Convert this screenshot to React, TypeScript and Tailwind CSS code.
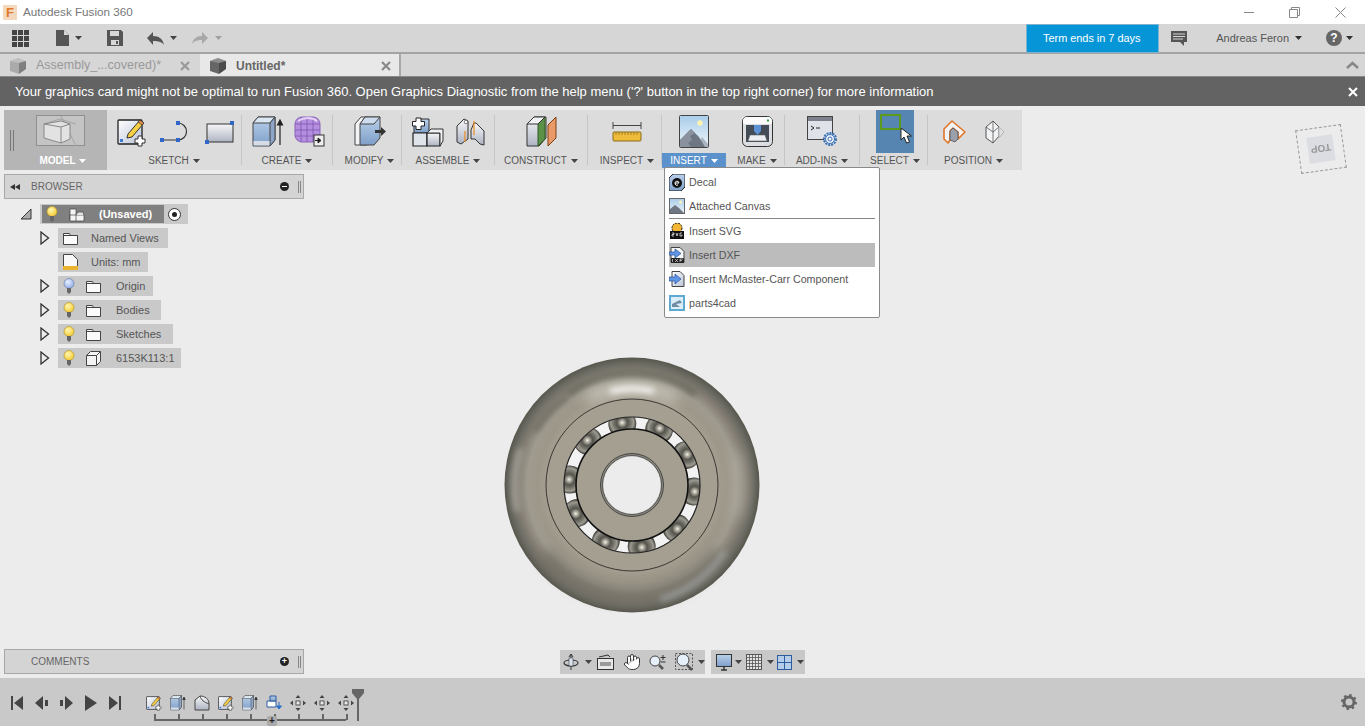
import type { ReactNode } from "react";
import { Hand } from "lucide-react";

function Caret({ color = "#444" }: { color?: string }) {
  return (
    <svg width="7" height="4" viewBox="0 0 7 4" className="shrink-0">
      <path d="M0 0h7L3.5 4z" fill={color} />
    </svg>
  );
}

function Defs() {
  return (
    <svg className="absolute w-0 h-0">
      <defs>
        <linearGradient id="gBlue" x1="0" y1="0" x2="0" y2="1">
          <stop offset="0" stopColor="#b9d0ea" />
          <stop offset="1" stopColor="#7f9fc8" />
        </linearGradient>
        <linearGradient id="gGrey" x1="0" y1="0" x2="0" y2="1">
          <stop offset="0" stopColor="#f6f7f9" />
          <stop offset="1" stopColor="#aeb4c2" />
        </linearGradient>
        <linearGradient id="gSky" x1="0" y1="0" x2="0" y2="1">
          <stop offset="0" stopColor="#a9cdea" />
          <stop offset="1" stopColor="#eef5fa" />
        </linearGradient>
        <linearGradient id="gPaper" x1="0" y1="0" x2="1" y2="1">
          <stop offset="0" stopColor="#ffffff" />
          <stop offset="1" stopColor="#b9c3d6" />
        </linearGradient>
        <radialGradient id="gBulbY" cx="0.4" cy="0.35" r="0.7">
          <stop offset="0" stopColor="#fff7b0" />
          <stop offset="1" stopColor="#f2c92c" />
        </radialGradient>
        <radialGradient id="gBulbB" cx="0.4" cy="0.35" r="0.7">
          <stop offset="0" stopColor="#e6efff" />
          <stop offset="1" stopColor="#8fabe6" />
        </radialGradient>
        <radialGradient id="gTorus" gradientUnits="userSpaceOnUse" cx="0" cy="0" r="128">
          <stop offset="0.66" stopColor="#a59f91" />
          <stop offset="0.74" stopColor="#9d9789" />
          <stop offset="0.82" stopColor="#a09b8f" />
          <stop offset="0.89" stopColor="#857f75" />
          <stop offset="0.95" stopColor="#6c6b63" />
          <stop offset="1" stopColor="#56554c" />
        </radialGradient>
        <radialGradient id="gBall" cx="0.5" cy="0.46" r="0.5">
          <stop offset="0" stopColor="#f4f2ea" />
          <stop offset="0.14" stopColor="#b5b2a6" />
          <stop offset="0.38" stopColor="#55544d" />
          <stop offset="0.6" stopColor="#74736a" />
          <stop offset="0.82" stopColor="#9c9a91" />
          <stop offset="1" stopColor="#45453f" />
        </radialGradient>
        <clipPath id="ballRing">
          <path
            clipRule="evenodd"
            d="M-68 0a68 68 0 1 0 136 0a68 68 0 1 0-136 0zM-56 0a56 56 0 1 0 112 0a56 56 0 1 0-112 0z"
          />
        </clipPath>
        <filter id="blur2" filterUnits="userSpaceOnUse" x="-128" y="-128" width="256" height="256">
          <feGaussianBlur stdDeviation="3" />
        </filter>
        <filter id="blur4" filterUnits="userSpaceOnUse" x="-128" y="-128" width="256" height="256">
          <feGaussianBlur stdDeviation="7" />
        </filter>
      </defs>
    </svg>
  );
}

function SketchIcon({ s = 30 }: { s?: number }) {
  return (
    <svg width={s} height={s} viewBox="0 0 30 30">
      <rect x="1" y="3" width="24" height="24" rx="1" fill="url(#gPaper)" stroke="#222" strokeWidth="1.3" />
      <rect x="3" y="22" width="3" height="3" fill="#3d7ad0" />
      <path d="M11 17L23 3l4 3-12 14-5 1z" fill="#f6cf45" stroke="#333" />
      <path d="M23 3l4 3-2 2-4-3z" fill="#e58a4a" stroke="#333" strokeWidth=".7" />
      <path d="M21 19h4v3h3v4h-3v3h-4v-3h-3v-4h3z" fill="#fff" stroke="#333" />
    </svg>
  );
}

function ExtrudeIcon({ s = 32 }: { s?: number }) {
  return (
    <svg width={s} height={s} viewBox="0 0 32 32">
      <path d="M1 7l5-6h17v23l-5 6H1z" fill="url(#gBlue)" stroke="#444" />
      <path d="M1 7l5-6h17l-5 6z" fill="#dbe6f3" stroke="#444" />
      <path d="M18 7l5-6v23l-5 6z" fill="#8da5c8" stroke="#444" />
      <path d="M1.5 25h16v4.5h-16z" fill="#d6dce6" />
      <path d="M28 29V6M25.5 9L28 4l2.500 5z" stroke="#222" strokeWidth="1.2" fill="#222" />
    </svg>
  );
}

function FormIcon() {
  return (
    <svg width="31" height="31" viewBox="0 0 31 31">
      <rect x="1" y="1" width="25" height="25" rx="7" fill="#b48fe0" stroke="#8a63b8" />
      <path d="M7 1v25M13 1v25M19 1v25M1 8h25M1 14h25M1 20h25" stroke="#7d55ad" strokeWidth="0.8" />
      <path d="M4 5c6-4 14-4 19 0" stroke="#e3d2f5" strokeWidth="2" fill="none" />
      <rect x="20" y="19" width="10" height="11" fill="#eee" stroke="#333" />
      <path d="M21 24.500h5M24 22l3 2.500-3 2.500z" stroke="#222" fill="#222" />
    </svg>
  );
}

function ModifyIcon() {
  return (
    <svg width="32" height="32" viewBox="0 0 32 32">
      <path d="M1 8l6-7h6v28H1z" fill="#f3f4f6" stroke="#444" />
      <path d="M6 29V8l5-7h15v21l-6 7z" fill="url(#gBlue)" stroke="#444" />
      <path d="M6 8l5-7h15l-6 7z" fill="#cddcee" stroke="#444" />
      <path d="M21 14h6v-3l5 4.500-5 4.500v-3h-6z" fill="#333" />
    </svg>
  );
}

function AssembleIcon() {
  return (
    <svg width="32" height="30" viewBox="0 0 32 30">
      <path d="M2 6l4-4h11v14H2z" fill="url(#gBlue)" stroke="#333" />
      <path d="M1 16h14v13H1z" fill="#dfe3ea" stroke="#222" strokeWidth="1.200" />
      <path d="M15 16h13v13H15z" fill="url(#gGrey)" stroke="#222" strokeWidth="1.200" />
      <path d="M15 16l4-4h12v12l-3 5V16z" fill="#eef0f3" stroke="#333" />
      <path d="M4 1h5v3.500h3.500v4.500H9v3.500H4V9H.5V4.500H4z" fill="#fff" stroke="#222" />
    </svg>
  );
}

function JointIcon() {
  return (
    <svg width="29" height="30" viewBox="0 0 29 30">
      <path d="M1 9l7-7 4 2v18l-7 5-4-2z" fill="url(#gGrey)" stroke="#333" />
      <circle cx="10" cy="5" r="1.800" fill="#fff" stroke="#333" strokeWidth=".6" />
      <path d="M15 13l3-7h2l8 8v14l-4-1-5-5h-4z" fill="url(#gGrey)" stroke="#333" />
      <path d="M9 14v11M18 4v14" stroke="#f08a1f" strokeWidth="1.200" />
    </svg>
  );
}

function ConstructIcon() {
  return (
    <svg width="31" height="31" viewBox="0 0 31 31">
      <path d="M1 8l7-7h12v21l-7 8H1z" fill="url(#gGrey)" stroke="#333" />
      <path d="M12 8l7-7v22l-7 7z" fill="#5c9148" stroke="#2f5a22" />
      <path d="M1 8l7-7h11l-7 7z" fill="#f1f2f4" stroke="#333" />
      <path d="M22 9l8-8v21l-8 8z" fill="#ea9a66" stroke="#7a3e14" />
    </svg>
  );
}

function InspectIcon() {
  return (
    <svg width="30" height="22" viewBox="0 0 30 22">
      <path d="M1 1v7M29 1v7M1 4.500h28" stroke="#444" fill="none" />
      <rect x="1" y="11" width="28" height="9" rx="1" fill="#eebc3a" stroke="#8a6d1d" />
      <path d="M4 11v3M7 11v3M10 11v3M13 11v3M16 11v3M19 11v3M22 11v3M25 11v3" stroke="#8a6d1d" strokeWidth=".7" />
    </svg>
  );
}

function PictureIcon({ s = 30 }: { s?: number }) {
  return (
    <svg width={s} height={s * 1.1} viewBox="0 0 30 33">
      <rect x="0.500" y="0.500" width="29" height="32" rx="1" fill="url(#gSky)" stroke="#444" />
      <circle cx="21" cy="8" r="2.700" fill="#fff3b0" />
      <path d="M18 32l5-10 6 7v3z" fill="#a9b4c0" />
      <path d="M1 32V25L12 14l8 8 6 10z" fill="#6f7785" />
      <path d="M12 14l4 4-5 3 2 4-4 3 3 4H1v-7z" fill="#8a92a0" />
    </svg>
  );
}

function MakeIcon() {
  return (
    <svg width="31" height="31" viewBox="0 0 31 31">
      <rect x="0.500" y="0.500" width="30" height="30" rx="5" fill="#dcdee2" stroke="#333" />
      <path d="M1 5a4 4 0 0 1 4-4h21a4 4 0 0 1 4 4v3H1z" fill="#fbfbfc" />
      <rect x="4" y="9" width="23" height="17" fill="#444c58" />
      <path d="M12 9h7v6l-3.500 4-3.500-4z" fill="#5d93d6" />
      <path d="M8 19h15l2 6H6z" fill="#eceef2" stroke="#666" strokeWidth=".6" />
      <rect x="25" y="3.500" width="2" height="2" fill="#2f9a3a" />
    </svg>
  );
}

function AddInsIcon() {
  return (
    <svg width="31" height="31" viewBox="0 0 31 31">
      <rect x="0.500" y="0.500" width="25" height="23" fill="#dfe2e8" stroke="#444" />
      <rect x="1" y="1" width="24" height="4" fill="#7b808a" />
      <path d="M4 10l3 2-3 2M9 12h4" stroke="#222" fill="none" />
      <circle cx="23" cy="23" r="6" fill="#cfe0f5" stroke="#3b6fb0" strokeWidth="2" strokeDasharray="2 1" />
      <circle cx="23" cy="23" r="4.500" fill="#e9f0fa" stroke="#3b6fb0" />
      <circle cx="23" cy="23" r="2" fill="#fff" stroke="#3b6fb0" />
    </svg>
  );
}

function SelectIcon() {
  return (
    <div className="relative w-[38px] h-[43px] bg-[#5585b0] -mt-[1px]">
      <div className="absolute left-[4px] top-[4px] w-[21px] h-[16px] border-2 border-[#5c9a1c]" />
      <svg width="13" height="16" viewBox="0 0 13 16" className="absolute left-[24px] top-[18px]">
        <path d="M1 0v12l3-3 2.500 6 3-1-2.500-6h4.500z" fill="#fff" stroke="#222" />
      </svg>
    </div>
  );
}

function PositionIcon() {
  return (
    <svg width="23" height="24" viewBox="0 0 23 24">
      <path d="M9 1l13 11-7 7v-7l-5-4-3 3v9l-2 3-4-4V9z" fill="#f2f3f6" stroke="#e0762a" strokeWidth="1.600" strokeLinejoin="round" />
      <path d="M7 11l3-3 5 4v7l-3 3-5-2z" fill="#9aa0aa" stroke="#444" strokeWidth=".7" />
    </svg>
  );
}

function PositionIcon2() {
  return (
    <svg width="20" height="24" viewBox="0 0 20 24">
      <path d="M8 1l6 6v9l-6 7-7-5V7z" fill="#f2f3f5" stroke="#555" />
      <path d="M8 1v22M1 7l7 5 6-5" stroke="#555" fill="none" strokeWidth=".8" />
      <path d="M14 7l5 5-5 6z" fill="#e0e0e0" stroke="#b5b5b5" />
    </svg>
  );
}

function Cube({ color = "#666", s = 16 }: { color?: string; s?: number }) {
  return (
    <svg width={s} height={s} viewBox="0 0 16 16">
      <path d="M0 3l8-3 8 3v8l-7 5-9-3z" fill={color} />
      <path d="M0 3l9 2 7-2-8-3z" fill="#fff" fillOpacity=".25" />
      <path d="M9 5v11l7-5V3z" fill="#000" fillOpacity=".25" />
    </svg>
  );
}

function CloseX({ color }: { color: string }) {
  return (
    <svg width="10" height="10" viewBox="0 0 10 10" className="ml-auto mr-[8px] shrink-0">
      <path d="M1 1l8 8M9 1L1 9" stroke={color} strokeWidth="2.200" />
    </svg>
  );
}

function Bulb({ blue = false }: { blue?: boolean }) {
  return (
    <svg width="12" height="16" viewBox="0 0 12 16" className="shrink-0">
      <circle cx="6" cy="5.500" r="5" fill={blue ? "url(#gBulbB)" : "url(#gBulbY)"} stroke={blue ? "#6d80a8" : "#b8962a"} strokeWidth=".7" />
      <path d="M4 10h4v3.500l-1 2H5l-1-2z" fill="#666" />
    </svg>
  );
}

function Folder() {
  return (
    <svg width="15" height="13" viewBox="0 0 15 13" className="shrink-0">
      <path d="M.5 1.500h6l1 2h7v9H.5z" fill="#fbfbfb" stroke="#444" />
      <path d="M.5 3.500h14" stroke="#444" />
    </svg>
  );
}

function Arrow() {
  return (
    <svg width="10" height="14" viewBox="0 0 10 14" className="shrink-0">
      <path d="M1 1l7.500 6L1 13z" fill="#ececec" stroke="#333" strokeWidth="1.300" />
    </svg>
  );
}

function TreeRow({
  label,
  leading,
  icon,
  width,
  gapClass,
  arrow = true,
}: {
  label: string;
  leading?: ReactNode;
  icon: ReactNode;
  width: string;
  gapClass: string;
  arrow?: boolean;
}) {
  return (
    <div className="flex items-center h-[20px]">
      <div className="w-[18px] flex justify-start">{arrow && <Arrow />}</div>
      <div className={`${width} h-[20px] bg-[#c9c9c9] flex items-center pl-[5px] text-[11px] text-[#555]`}>
        {leading && <span className="mr-[11px] flex">{leading}</span>}
        {icon}
        <span className={gapClass}>{label}</span>
      </div>
    </div>
  );
}

function ToolGroup({ width, label, children }: { width: string; label: string; children: ReactNode }) {
  return (
    <div className={`${width} flex flex-col items-center shrink-0`}>
      <div className="h-[43px] w-full flex items-center justify-center">{children}</div>
      <div className="h-[15px] flex items-center gap-[4px] text-[10px] text-[#555]">
        {label}
        <Caret />
      </div>
    </div>
  );
}

function Sep() {
  return <div className="w-px h-[50px] self-center bg-[#c6c6c6] shrink-0" />;
}

function Toolbar() {
  return (
    <div className="ml-[4px] mt-[4px] w-[1018px] h-[60px] bg-[#dcdcdc] flex">
      <div className="w-[103px] h-[60px] bg-[#b5b5b5] relative flex flex-col items-center shrink-0">
        <div className="absolute left-[6px] top-[20px] w-[4px] h-[21px] border-x border-[#777]" />
        <svg width="50" height="32" viewBox="0 0 50 32" className="mt-[5px] ml-[10px]">
          <rect x="0.500" y="0.500" width="48" height="30" fill="#c4c4c4" stroke="#8f8f8f" />
          <path d="M25 1l15 30M8 9l16-5 16 5" stroke="#a5a5a5" fill="none" />
          <path d="M8 9l17-3 9 3v15l-9 4-17-5z" fill="#e2e2e2" stroke="#888" />
          <path d="M8 9l17 3 9-3M25 12v16" stroke="#888" fill="none" />
        </svg>
        <div className="mt-[6px] ml-[14px] flex items-center gap-[3px] text-[10px] font-bold text-white">
          MODEL
          <Caret color="#fff" />
        </div>
      </div>

      <ToolGroup width="w-[134px]" label="SKETCH">
        <div className="flex items-center gap-[13px] ml-[3px]">
          <SketchIcon />
          <svg width="32" height="24" viewBox="0 0 32 24">
            <path d="M2 20h16a8.500 8.500 0 0 0 0-17h-2" fill="none" stroke="#333" strokeWidth="1.200" />
            <path d="M0 18h4v4H0zM16 18h4v4h-4zM16 1h4v4h-4z" fill="#2f66c8" />
          </svg>
          <svg width="30" height="26" viewBox="0 0 30 26">
            <rect x="2" y="5" width="26" height="18" fill="url(#gGrey)" stroke="#333" />
            <path d="M25 2h4v4h-4zM0 21h4v4H0z" fill="#2f66c8" />
          </svg>
        </div>
      </ToolGroup>
      <Sep />
      <ToolGroup width="w-[90px]" label="CREATE">
        <div className="flex items-center gap-[10px] ml-[2px]">
          <ExtrudeIcon />
          <FormIcon />
        </div>
      </ToolGroup>
      <Sep />
      <ToolGroup width="w-[68px] pl-[5px]" label="MODIFY">
        <ModifyIcon />
      </ToolGroup>
      <Sep />
      <ToolGroup width="w-[92px]" label="ASSEMBLE">
        <div className="flex items-center gap-[12px]">
          <AssembleIcon />
          <JointIcon />
        </div>
      </ToolGroup>
      <Sep />
      <ToolGroup width="w-[92px]" label="CONSTRUCT">
        <ConstructIcon />
      </ToolGroup>
      <Sep />
      <ToolGroup width="w-[73px] pl-[5px]" label="INSPECT">
        <InspectIcon />
      </ToolGroup>
      <Sep />
      <div className="w-[64px] flex flex-col items-center shrink-0">
        <div className="h-[43px] w-full flex items-center justify-center">
          <PictureIcon />
        </div>
        <div className="h-[15px] w-full bg-[#5b92cc] flex items-center justify-center gap-[4px] text-[10px] text-white">
          INSERT
          <Caret color="#fff" />
        </div>
      </div>
      <ToolGroup width="w-[58px] pl-[4px]" label="MAKE">
        <MakeIcon />
      </ToolGroup>
      <Sep />
      <ToolGroup width="w-[74px]" label="ADD-INS">
        <AddInsIcon />
      </ToolGroup>
      <Sep />
      <ToolGroup width="w-[67px] pl-[3px]" label="SELECT">
        <SelectIcon />
      </ToolGroup>
      <Sep />
      <div className="flex-1 flex flex-col items-center pr-[3px]">
        <div className="h-[43px] flex items-center gap-[19px]">
          <PositionIcon />
          <PositionIcon2 />
        </div>
        <div className="h-[15px] flex items-center gap-[4px] text-[10px] text-[#555]">
          POSITION
          <Caret />
        </div>
      </div>
    </div>
  );
}

function MenuRow({ icon, label, active = false }: { icon: ReactNode; label: string; active?: boolean }) {
  return (
    <div className={`h-[24px] flex items-center gap-[4px] text-[10.7px] text-[#555] shrink-0 ${active ? "bg-[#bcbcbc]" : ""}`}>
      <span className="w-[16px] h-[16px] flex shrink-0">{icon}</span>
      {label}
    </div>
  );
}

function InsertMenu() {
  return (
    <div className="absolute left-[664px] top-[61px] w-[216px] h-[151px] bg-white border border-[#8a8a8a] rounded-[2px] px-[4px] pt-[2px] flex flex-col">
      <MenuRow
        label="Decal"
        icon={
          <svg width="16" height="17" viewBox="0 0 16 17">
            <path d="M0 4l4-4h12v13l-4 4H0z" fill="url(#gBlue)" stroke="#222" />
            <circle cx="8" cy="9" r="5" fill="#111" />
            <path d="M6 9h4a2 2 0 1 0-1 2" stroke="#fff" fill="none" />
          </svg>
        }
      />
      <MenuRow
        label="Attached Canvas"
        icon={
          <svg width="16" height="16" viewBox="0 0 16 16">
            <rect x=".5" y=".5" width="15" height="15" fill="url(#gSky)" stroke="#666" />
            <path d="M1 15v-4l5-4 4 3 5 5z" fill="#6f7785" />
            <circle cx="11.500" cy="4" r="1.500" fill="#fff3b0" />
          </svg>
        }
      />
      <div className="h-px bg-[#888] shrink-0" />
      <MenuRow
        label="Insert SVG"
        icon={
          <svg width="16" height="16" viewBox="0 0 16 16">
            <circle cx="8" cy="5" r="5" fill="#f2b632" stroke="#111" strokeDasharray="2 1" />
            <rect x="1" y="8" width="14" height="8" fill="#111" />
            <path d="M3 10h2v1.500H3v1.500h2M7 10l1 3 1-3M13 10h-2v3h2v-1.500" stroke="#fff" strokeWidth=".7" fill="none" />
          </svg>
        }
      />
      <MenuRow
        active
        label="Insert DXF"
        icon={
          <svg width="16" height="16" viewBox="0 0 16 16">
            <path d="M2 .5h9l4 4v11H2z" fill="#f5f5f5" stroke="#444" />
            <path d="M0 5h6V2l6 4.500-6 4.500V8H0z" fill="#5f97e6" stroke="#264f9a" strokeWidth=".7" />
            <rect x="2" y="11" width="13" height="5" fill="#222" />
            <path d="M3.500 12v3M6 12l3 3M9 12l-3 3M11 15v-3h3M11 13.500h2" stroke="#fff" strokeWidth=".6" fill="none" />
          </svg>
        }
      />
      <MenuRow
        label="Insert McMaster-Carr Component"
        icon={
          <svg width="16" height="16" viewBox="0 0 16 16">
            <path d="M3 .5h8l4 4v11H3z" fill="url(#gPaper)" stroke="#444" />
            <path d="M0 6h6V3l6 5-6 5v-3H0z" fill="#5f97e6" stroke="#264f9a" strokeWidth=".7" />
          </svg>
        }
      />
      <MenuRow
        label="parts4cad"
        icon={
          <svg width="16" height="16" viewBox="0 0 16 16">
            <rect width="16" height="16" fill="#5da9d2" />
            <rect x="2" y="2" width="12" height="12" fill="#dceef7" />
            <path d="M3 9l8-4 2 3-6 1 4 3H3z" fill="#6f8ea3" />
          </svg>
        }
      />
    </div>
  );
}

function Bearing() {
  const balls = [-9, 26, 61, 96, 134, 171, 205, 243, 275, 315];
  return (
    <svg width="256" height="256" viewBox="-128 -128 256 256" className="absolute left-[504px] top-[251px]">
      <circle r="127.500" fill="url(#gTorus)" />
      <g fill="none" strokeLinecap="round">
        <path d="M-62 -92a111 111 0 0 1 124 0" stroke="#5f5e55" strokeWidth="5" filter="url(#blur2)" />
        <path d="M-42 -88a97 97 0 0 1 84 0" stroke="#dedcd2" strokeWidth="8" filter="url(#blur4)" />
        <path d="M-20 -94a96 96 0 0 1 40 0" stroke="#fff" strokeWidth="5" filter="url(#blur2)" />
        <path d="M-85 70a110 110 0 0 0 170 0" stroke="#67645a" strokeWidth="9" filter="url(#blur4)" />
        <path d="M30 114a118 118 0 0 0 62 -46" stroke="#a3a8a7" strokeWidth="4" filter="url(#blur2)" />
        <path d="M-112 -35a118 118 0 0 0 -3 60" stroke="#b5b3aa" strokeWidth="4" filter="url(#blur2)" />
        <path d="M104 -30a108 108 0 0 1 0 60" stroke="#b8b4a8" strokeWidth="6" filter="url(#blur4)" />
        <path d="M-96 -55a111 111 0 0 1 30 -32" stroke="#6a6960" strokeWidth="5" filter="url(#blur2)" />
      </g>
      <circle r="86" fill="#a59f91" stroke="#1d1d1a" strokeWidth=".8" />
      <circle r="68" fill="#f2f2f2" />
      <g clipPath="url(#ballRing)">
        {balls.map((a) => (
          <g key={a} transform={`rotate(${a}) translate(0 -62)`}>
            <circle r="14" fill="url(#gBall)" />
          </g>
        ))}
      </g>
      <circle r="68" fill="none" stroke="#222" strokeWidth="1.200" />
      <circle r="56" fill="#a59f91" stroke="#111" strokeWidth="1.600" />
      <circle r="31.500" fill="#8b8a82" stroke="#222" strokeWidth=".7" />
      <circle r="29.500" fill="#c8c8c4" stroke="#333" strokeWidth=".7" />
      <circle r="28.500" fill="#ececec" />
    </svg>
  );
}

function ViewCube() {
  return (
    <div className="absolute left-[1298px] top-[21px] w-[46px] h-[44px] border border-dashed border-[#999] rotate-[-8deg] flex items-center justify-center">
      <div className="w-[26px] h-[26px] bg-[#dcdde2] flex items-center justify-center rotate-180 text-[10px] font-bold text-[#999]">
        TOP
      </div>
    </div>
  );
}

function NavBar() {
  return (
    <div className="absolute left-[560px] bottom-[4px] flex gap-[6px]">
      <div className="w-[145px] h-[24px] bg-[#c8c8c8] flex items-center pl-[3px]">
        <svg width="16" height="18" viewBox="0 0 16 18">
          <path d="M8 1v16M8 1L6 4M8 1l2 3" stroke="#333" fill="none" />
          <ellipse cx="8" cy="10" rx="7" ry="3" fill="none" stroke="#333" strokeWidth="1.200" />
          <path d="M6 5h4v8H6z" fill="#dfe4ea" stroke="#345" strokeWidth=".6" />
        </svg>
        <span className="ml-[6px]"><Caret /></span>
        <svg width="17" height="16" viewBox="0 0 17 16" className="ml-[5px]">
          <path d="M2 3l9-2 2 2" stroke="#333" fill="none" />
          <rect x=".5" y="4.500" width="16" height="11" fill="#e8e8e8" stroke="#333" />
          <rect x="3" y="8" width="11" height="4" fill="#9a9a9a" />
        </svg>
        <Hand size={18} strokeWidth={1.3} color="#333" fill="#fff" className="ml-[9px]" />
        <svg width="18" height="17" viewBox="0 0 18 17" className="ml-[8px]">
          <circle cx="6" cy="7" r="5" fill="#e6f0fa" stroke="#444" />
          <path d="M10 11l4 4" stroke="#555" strokeWidth="2.500" />
          <path d="M14 1v5M11.500 3.500h5M11.500 8h5" stroke="#333" />
        </svg>
        <svg width="19" height="18" viewBox="0 0 19 18" className="ml-[8px]">
          <rect x=".5" y=".5" width="17" height="16" fill="none" stroke="#555" strokeDasharray="2 1.500" />
          <circle cx="8" cy="7" r="6" fill="#e6f0fa" stroke="#444" />
          <path d="M12 12l5 5" stroke="#555" strokeWidth="2.500" />
        </svg>
        <span className="ml-[4px]"><Caret /></span>
      </div>
      <div className="w-[94px] h-[24px] bg-[#c8c8c8] flex items-center pl-[5px]">
        <svg width="16" height="17" viewBox="0 0 16 17">
          <rect x=".5" y=".5" width="15" height="12" fill="url(#gBlue)" stroke="#333" />
          <path d="M5 16h6M8 13v3" stroke="#333" strokeWidth="1.500" />
        </svg>
        <span className="ml-[3px]"><Caret /></span>
        <svg width="16" height="16" viewBox="0 0 16 16" className="ml-[4px]">
          <rect x=".5" y=".5" width="15" height="15" fill="#e4e4e4" stroke="#555" />
          <path d="M3.500 0v16M6.500 0v16M9.500 0v16M12.500 0v16M0 3.500h16M0 6.500h16M0 9.500h16M0 12.500h16" stroke="#555" strokeWidth=".8" />
        </svg>
        <span className="ml-[5px]"><Caret /></span>
        <svg width="15" height="15" viewBox="0 0 15 15" className="ml-[3px]">
          <rect x=".5" y=".5" width="14" height="14" fill="#b6cdea" stroke="#2c5b9e" />
          <path d="M7.500 0v15M0 7.500h15" stroke="#2c5b9e" />
        </svg>
        <span className="ml-[5px]"><Caret /></span>
      </div>
    </div>
  );
}

function TimelineMove() {
  return (
    <svg width="16" height="16" viewBox="0 0 16 16">
      <path d="M8 0l2.500 3h-5zM8 16l2.500-3h-5zM0 8l3-2.500v5zM16 8l-3-2.500v5z" fill="#444" />
      <rect x="6" y="6" width="4" height="4" fill="#eee" stroke="#555" />
    </svg>
  );
}

function Timeline() {
  const ticks = [0, 1, 2, 3, 4, 5, 6, 7, 8];
  return (
    <div className="h-[48px] bg-[#c9c9c9] flex items-start pl-[11px] relative shrink-0">
      <div className="flex items-center gap-[12px] mt-[17px]">
        <svg width="12" height="14" viewBox="0 0 12 14"><path d="M0 0h2v14H0zM12 0v14L3 7z" fill="#444" /></svg>
        <svg width="13" height="14" viewBox="0 0 13 14"><path d="M8 0v14L0 7zM10 4h3v6h-3z" fill="#444" /></svg>
        <svg width="13" height="14" viewBox="0 0 13 14"><path d="M5 0v14l8-7zM0 4h3v6H0z" fill="#444" /></svg>
        <svg width="12" height="16" viewBox="0 0 12 16"><path d="M0 0v16l12-8z" fill="#444" /></svg>
        <svg width="12" height="14" viewBox="0 0 12 14"><path d="M12 0h-2v14h2zM0 0v14l9-7z" fill="#444" /></svg>
      </div>
      <div className="absolute left-[146px] top-[17px] flex gap-[8px]">
        <SketchIcon s={16} />
        <ExtrudeIcon s={16} />
        <svg width="16" height="16" viewBox="0 0 16 16">
          <path d="M1 5l5-4c5 0 9 3 9 8v6H1z" fill="url(#gGrey)" stroke="#444" />
          <path d="M6 1c1 4 4 6 9 8" stroke="#444" fill="none" />
        </svg>
        <SketchIcon s={16} />
        <ExtrudeIcon s={16} />
        <svg width="16" height="16" viewBox="0 0 16 16">
          <path d="M1 6h9v6H1z" fill="#fff" stroke="#2c5b9e" />
          <path d="M4 1h6v5H4z" fill="url(#gBlue)" stroke="#2c5b9e" />
          <path d="M13 7v6M10.500 11l2.500 3 2.500-3z" stroke="#2c6fc9" fill="#2c6fc9" />
        </svg>
        <TimelineMove />
        <TimelineMove />
        <TimelineMove />
      </div>
      <div className="absolute left-[154px] top-[41px] w-[192px] h-[2px] bg-[#666]" />
      {ticks.map((t) => (
        <div key={t} className="absolute top-[36px] w-[2px] h-[6px] bg-[#666]" style={{ left: 154 + t * 24 }} />
      ))}
      <div className="absolute left-[267px] top-[38px] w-[10px] h-[10px] bg-[#aaa] rounded-[2px] flex items-center justify-center text-[10px] leading-none font-bold text-[#222]">
        +
      </div>
      <svg width="12" height="32" viewBox="0 0 12 32" className="absolute left-[352px] top-[11px]">
        <path d="M0 0h12v4L7 10v22H5V10L0 4z" fill="#666" />
      </svg>
      <svg width="16" height="16" viewBox="0 0 16 16" className="absolute left-[1341px] top-[16px]">
        <circle cx="8" cy="8" r="5" fill="none" stroke="#666" strokeWidth="3" />
        <circle cx="8" cy="8" r="7" fill="none" stroke="#666" strokeWidth="2" strokeDasharray="2.500 3" />
      </svg>
    </div>
  );
}

export default function App() {
  return (
    <div className="w-full h-screen flex flex-col overflow-hidden bg-[#ececec] font-['Liberation_Sans',sans-serif]">
      <Defs />
      {/* title bar */}
      <div className="h-[24px] bg-white flex items-center pl-[3px] shrink-0">
        <div className="w-[14px] h-[15px] bg-[#f4d9bf] flex items-center justify-center text-[13px] font-bold leading-none text-[#e07a2b]">F</div>
        <span className="ml-[6px] text-[11.7px] text-[#777]">Autodesk Fusion 360</span>
        <div className="ml-auto flex items-center gap-[35px] pr-[19px]">
          <div className="w-[10px] h-px bg-[#888]" />
          <svg width="11" height="11" viewBox="0 0 11 11">
            <path d="M.5 2.500h8v8h-8zM2.500 2.500v-2h8v8h-2" fill="none" stroke="#888" />
          </svg>
          <svg width="11" height="11" viewBox="0 0 11 11">
            <path d="M.5.5l10 10M10.500.5l-10 10" stroke="#888" />
          </svg>
        </div>
      </div>
      {/* quick access */}
      <div className="h-[30px] bg-[#d6d6d6] border-b-2 border-[#a3a3a3] flex items-center shrink-0">
        <svg width="17" height="17" viewBox="0 0 17 17" className="ml-[12px]">
          <path d="M0 0h5v5H0zM6 0h5v5H6zM12 0h5v5h-5zM0 6h5v5H0zM6 6h5v5H6zM12 6h5v5h-5zM0 12h5v5H0zM6 12h5v5H6zM12 12h5v5h-5z" fill="#444" />
        </svg>
        <svg width="13" height="16" viewBox="0 0 13 16" className="ml-[27px]">
          <path d="M0 0h8l5 5v11H0z" fill="#555" />
          <path d="M8 0v5h5" fill="#d6d6d6" />
        </svg>
        <span className="ml-[6px]"><Caret /></span>
        <svg width="16" height="16" viewBox="0 0 16 16" className="ml-[25px]">
          <path d="M0 0h14l2 2v14H0z" fill="#555" />
          <path d="M3 1h9v5H3z" fill="#d6d6d6" />
          <path d="M4 10h8v5H4z" fill="#d6d6d6" />
          <path d="M9 11h2v3H9z" fill="#555" />
        </svg>
        <svg width="17" height="13" viewBox="0 0 17 13" className="ml-[24px]">
          <path d="M6 0v4c6 0 10 3 11 9-2-3-5-4-11-4v4L0 6z" fill="#555" />
        </svg>
        <span className="ml-[6px]"><Caret /></span>
        <svg width="16" height="12" viewBox="0 0 16 12" className="ml-[15px]">
          <path d="M10 0v4C4 4 1 7 0 12c2-3 5-4 10-4v4l6-6z" fill="#a8a8a8" />
        </svg>
        <span className="ml-[7px]"><Caret color="#a0a0a0" /></span>
        <div className="ml-auto w-[133px] h-[29px] bg-[#0696d7] border border-[#7fb2cf] flex items-center justify-center pr-[2px] text-[10.9px] text-white">
          Term ends in 7 days
        </div>
        <svg width="16" height="15" viewBox="0 0 16 15" className="ml-[12px]">
          <path d="M0 0h16v11h-3v4l-4-4H0z" fill="#555" />
          <path d="M2 3h12M2 5.500h12M2 8h10" stroke="#d6d6d6" />
        </svg>
        <span className="ml-[29px] text-[11px] text-[#555]">Andreas Feron</span>
        <span className="ml-[6px]"><Caret color="#333" /></span>
        <div className="ml-[24px] w-[16px] h-[16px] rounded-full bg-[#666] flex items-center justify-center text-[12px] font-bold text-white leading-none">?</div>
        <span className="ml-[4px] mr-[12px]"><Caret color="#333" /></span>
      </div>
      {/* tabs */}
      <div className="h-[22px] bg-[#d6d6d6] flex items-stretch shrink-0">
        <div className="w-[198px] flex items-center pl-[10px] pt-[1px] text-[12.5px] text-[#999]">
          <Cube color="#aaa" />
          <span className="ml-[10px]">Assembly_...covered)*</span>
          <CloseX color="#999" />
        </div>
        <div className="w-[201px] ml-[2px] bg-[#e8e8e8] border-r-2 border-[#a8a8a8] flex items-center pl-[10px] pt-[1px] text-[12px] font-bold text-[#666]">
          <Cube />
          <span className="ml-[10px]">Untitled*</span>
          <CloseX color="#888" />
        </div>
        <svg width="13" height="8" viewBox="0 0 13 8" className="ml-auto mr-[6px] self-center">
          <path d="M1 7l5.500-5L12 7" fill="none" stroke="#888" strokeWidth="2.500" />
        </svg>
      </div>
      {/* message bar */}
      <div className="h-[30px] border-t-[1px] border-[#888] bg-[#636363] flex items-center pl-[15px] text-[13px] text-white shrink-0">
        Your graphics card might not be optimal to run Fusion 360. Open Graphics Diagnostic from the help menu ('?' button in the top right corner) for more information
        <svg width="10" height="10" viewBox="0 0 10 10" className="ml-auto mr-[7px]">
          <path d="M1 1l8 8M9 1L1 9" stroke="#fff" strokeWidth="2" />
        </svg>
      </div>
      {/* canvas */}
      <div className="flex-1 relative flex flex-col min-h-0">
        <Toolbar />
        <div className="ml-[4px] mt-[4px] w-[300px] h-[25px] bg-[#d4d4d4] border border-[#a8a8a8] flex items-center text-[10px] text-[#666]">
          <svg width="10" height="6" viewBox="0 0 10 6" className="ml-[5px]"><path d="M5 0v6L0 3zM10 0v6L5 3z" fill="#333" /></svg>
          <span className="ml-[11px]">BROWSER</span>
          <span className="ml-auto w-[9px] h-[9px] rounded-full bg-[#222] flex items-center justify-center"><span className="w-[5px] h-px bg-white" /></span>
          <span className="ml-[9px] mr-[2px] w-[3px] h-[12px] border-x border-[#888]" />
        </div>
        <div className="ml-[20px] mt-[5px] flex flex-col gap-[4px]">
          <div className="flex items-center h-[20px]">
            <svg width="12" height="12" viewBox="0 0 12 12" className="mr-[8px]">
              <path d="M11 1v10H1z" fill="#aaa" stroke="#333" />
            </svg>
            <div className="w-[148px] h-[20px] bg-[#c9c9c9] flex items-center">
              <div className="w-[122px] ml-[2px] h-[18px] bg-[#808080] flex items-center pl-[4px] text-[11px] font-bold text-white">
                <Bulb />
                <svg width="16" height="15" viewBox="0 0 16 15" className="ml-[11px]">
                  <path d="M1 2h6v11H1z" fill="#f4f4f4" stroke="#444" strokeWidth=".7" />
                  <path d="M1 14V8h14v6z" fill="#f4f4f4" stroke="#444" strokeWidth=".7" />
                  <path d="M7 8l2-3h5l1 3M7 8v6" fill="#e2e2e2" stroke="#444" strokeWidth=".7" />
                </svg>
                <span className="ml-[14px]">(Unsaved)</span>
              </div>
              <span className="ml-[4px] w-[13px] h-[13px] rounded-full border border-[#333] bg-white flex items-center justify-center">
                <span className="w-[5px] h-[5px] rounded-full bg-[#222]" />
              </span>
            </div>
          </div>
          <div className="ml-[20px] flex flex-col gap-[4px]">
            <TreeRow label="Named Views" icon={<Folder />} width="w-[110px]" gapClass="ml-[13px]" />
            <TreeRow
              label="Units: mm"
              arrow={false}
              icon={
                <svg width="15" height="16" viewBox="0 0 15 16" className="shrink-0">
                  <path d="M.5.500h9l5 5v8H.5z" fill="#f8f8f8" stroke="#444" />
                  <path d="M0 12h15v4H0z" fill="#eab330" />
                </svg>
              }
              width="w-[90px]"
              gapClass="ml-[13px]"
            />
            <TreeRow label="Origin" leading={<Bulb blue />} icon={<Folder />} width="w-[95px]" gapClass="ml-[15px]" />
            <TreeRow label="Bodies" leading={<Bulb />} icon={<Folder />} width="w-[103px]" gapClass="ml-[15px]" />
            <TreeRow label="Sketches" leading={<Bulb />} icon={<Folder />} width="w-[115px]" gapClass="ml-[15px]" />
            <TreeRow
              label="6153K113:1"
              leading={<Bulb />}
              icon={
                <svg width="15" height="15" viewBox="0 0 15 15" className="shrink-0">
                  <path d="M.5 4.500l4-4h10v10l-4 4H.5z" fill="#f4f4f4" stroke="#444" />
                  <path d="M.5 4.500h10v10M10.500 4.500l4-4" fill="none" stroke="#444" />
                </svg>
              }
              width="w-[123px]"
              gapClass="ml-[15px]"
            />
          </div>
        </div>
        <div className="mt-auto mb-[4px] ml-[4px] w-[300px] h-[25px] bg-[#d4d4d4] border border-[#a8a8a8] flex items-center text-[10px] text-[#666]">
          <span className="ml-[26px]">COMMENTS</span>
          <span className="ml-auto w-[9px] h-[9px] rounded-full bg-[#222] flex items-center justify-center text-[9px] leading-none font-bold text-white">+</span>
          <span className="ml-[9px] mr-[2px] w-[3px] h-[12px] border-x border-[#888]" />
        </div>
        <InsertMenu />
        <Bearing />
        <ViewCube />
        <NavBar />
      </div>
      <Timeline />
    </div>
  );
}
